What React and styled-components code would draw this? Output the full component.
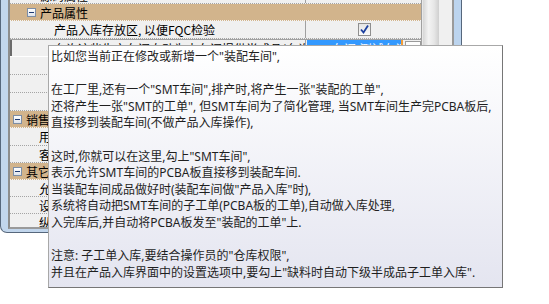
import React from 'react';
import styled, { createGlobalStyle } from 'styled-components';

const GlobalStyle = createGlobalStyle`
  html, body {
    margin: 0;
    padding: 0;
    background: #fff;
  }
  body {
    width: 549px;
    height: 304px;
    overflow: hidden;
    font-family: "Noto Sans CJK SC", sans-serif;
  }
`;

const Page = styled.div`
  position: relative;
  width: 549px;
  height: 304px;
  overflow: hidden;
`;

const Window = styled.div`
  width: 446px;
  margin-top: -13px;
  border: 1px solid #56677c;
  border-top: none;
  border-radius: 0 0 7px 7px;
  background: linear-gradient(90deg, #c2d6ec, #bad2ec 50%, #bcd4ee);
  padding: 0 7px 3px 7px;
`;

const Panel = styled.div`
  display: flex;
  border: 2px solid #9a9a9a;
  border-top: none;
  border-left-color: #8d8d8d;
  background: #f0f0f0;
`;

const Grid = styled.div`
  width: 411px;
  height: 240px;
  overflow: hidden;
  border-right: 1px solid #a0a0a0;
  font-size: 12px;
  color: #000;
`;

const ScrollBar = styled.div`
  width: 16px;
  background: linear-gradient(90deg, #d6d6d6, #f3f3f3 35%, #e6e6e6 70%, #cfcfcf);
  border-left: 1px solid #e8e8e8;
`;

const Row = styled.div`
  display: grid;
  grid-template-columns: 296px 1fr;
  height: ${p => p.$h}px;
  box-sizing: border-box;
  border-bottom: 1px dotted #a4a4a4;
  background: #f0f0f0;
`;

const EditRow = styled(Row)`
  border-top: 1px solid #a0a0a0;
  border-bottom: 1px solid #fff;
`;

const NameCell = styled.div`
  display: flex;
  align-items: center;
  padding-left: ${p => p.$indent}px;
  border-right: 1px solid #a0a0a0;
  white-space: nowrap;
  overflow: hidden;
  ${p => p.$edit && 'border-left: 2px solid #6b6b6b;'}
`;

const ValueCell = styled.div`
  display: flex;
  align-items: center;
  justify-content: ${p => (p.$center ? 'center' : 'flex-start')};
  padding-left: 1px;
  overflow: hidden;
`;

const Category = styled.div`
  display: flex;
  align-items: center;
  gap: 4px;
  height: ${p => p.$h}px;
  box-sizing: border-box;
  padding-left: ${p => p.$indent}px;
  background: #d2b48c;
  border-bottom: 1px dotted #f4f4f4;
`;

const Toggle = styled.span`
  position: relative;
  width: 9px;
  height: 9px;
  box-sizing: border-box;
  border: 1px solid #7d8ea6;
  background: linear-gradient(#ffffff, #dfe4ec);
  &::after {
    content: '';
    position: absolute;
    left: 1px;
    right: 1px;
    top: 3px;
    height: 1px;
    background: #1d3a72;
  }
`;

const CheckBox = styled.span`
  display: inline-flex;
  align-items: center;
  justify-content: center;
  width: 13px;
  height: 13px;
  box-sizing: border-box;
  border: 1px solid #8f8f8f;
  background: linear-gradient(#e4e4e4, #fafafa);
`;

const Selected = styled.span`
  background: #3399ff;
  color: #fff;
  padding: 0 1px;
  white-space: nowrap;
  width: 93px;
  overflow: hidden;
  border-right: 2px solid #f29c38;
`;

const EllipsisButton = styled.span`
  width: 16px;
  height: 15px;
  margin-left: 2px;
  box-sizing: border-box;
  border: 1px solid #9a9a9a;
  background: #fdfdfd;
`;

const Tooltip = styled.div`
  position: absolute;
  left: 48px;
  top: 45px;
  width: 455px;
  height: 243px;
  box-sizing: border-box;
  border: 1px solid #767676;
  border-top-color: #a8a8a8;
  border-left-color: #a8a8a8;
  background: linear-gradient(#ffffff, #e4e5f0);
  padding: 3px 0 0 2px;
  color: #1f1f1f;
  font-family: "Noto Sans", "Noto Sans CJK SC", sans-serif;
  font-size: 12px;
  line-height: 16.6px;
  white-space: pre;
`;

const Check = () => (
  <svg width="11" height="11" viewBox="0 0 11 11">
    <path d="M2 5.5 L4.5 8.5 L9 1.5" fill="none" stroke="#1b3f9e" strokeWidth="1.8" />
  </svg>
);

const tipLines = [
  '比如您当前正在修改或新增一个"装配车间",',
  '',
  '在工厂里,还有一个"SMT车间",排产时,将产生一张"装配的工单",',
  '还将产生一张"SMT的工单", 但SMT车间为了简化管理, 当SMT车间生产完PCBA板后,',
  '直接移到装配车间(不做产品入库操作),',
  '',
  '这时,你就可以在这里,勾上"SMT车间",',
  '表示允许SMT车间的PCBA板直接移到装配车间.',
  '当装配车间成品做好时(装配车间做"产品入库"时),',
  '系统将自动把SMT车间的子工单(PCBA板的工单),自动做入库处理,',
  '入完库后,并自动将PCBA板发至"装配的工单"上.',
  '',
  '注意: 子工单入库,要结合操作员的"仓库权限",',
  '并且在产品入库界面中的设置选项中,要勾上"缺料时自动下级半成品子工单入库".',
];

const Prop = ({ name, indent = 44, h = 18, children, center }) => (
  <Row $h={h}>
    <NameCell $indent={indent}>{name}</NameCell>
    <ValueCell $center={center}>{children}</ValueCell>
  </Row>
);

const App = () => {
  return (
    <Page>
      <GlobalStyle />
      <Window>
        <Panel>
          <Grid>
            <Prop name="源码属性" indent={30} h={17} />
            <Category $h={17} $indent={17}>
              <Toggle />
              产品属性
            </Category>
            <Prop name="产品入库存放区, 以便FQC检验" center>
              <CheckBox>
                <Check />
              </CheckBox>
            </Prop>
            <EditRow $h={18}>
              <NameCell $indent={42} $edit>允许这些生产车间自动为本车间提供半成品(允许</NameCell>
              <ValueCell>
                <Selected>SMT车间,测试车间</Selected>
                <EllipsisButton />
              </ValueCell>
            </EditRow>
            <Prop name="生产完成后自动入库" />
            <Prop name="入库时自动扣减原料" />
            <Prop name="领料时检查库存数量" />
            <Category $h={17} $indent={3}>
              <Toggle />
              销售属性
            </Category>
            <Prop name="用于销售" indent={29} />
            <Prop name="客户编码" indent={29} h={17} />
            <Category $h={17} $indent={3}>
              <Toggle />
              其它属性
            </Category>
            <Prop name="允许负库存" indent={29} h={17} />
            <Prop name="设为默认车间" indent={29} h={17} />
            <Prop name="纵向排列" indent={29} h={17} />
          </Grid>
          <ScrollBar />
        </Panel>
      </Window>
      <Tooltip>{tipLines.join('\n')}</Tooltip>
    </Page>
  );
};

export default App;
